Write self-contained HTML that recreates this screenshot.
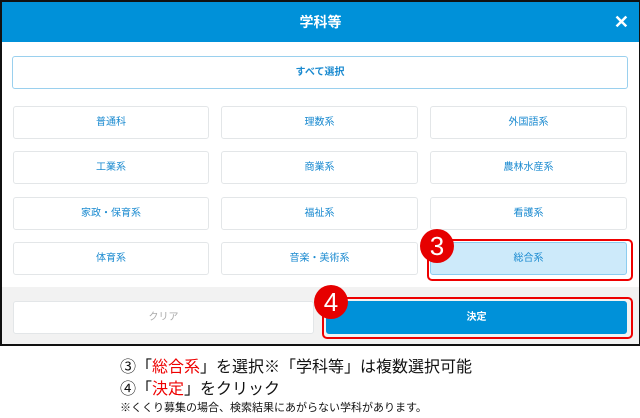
<!DOCTYPE html>
<html><head><meta charset="utf-8"><style>
*{margin:0;padding:0;box-sizing:border-box}
body{width:640px;height:418px;background:#fff;font-family:"Liberation Sans","Noto Sans CJK JP",sans-serif;position:relative;overflow:hidden}
.frame{position:absolute;left:0;top:0;width:640px;height:346px;border:2px solid #111;border-right:1px solid #111;background:#fff;overflow:hidden}
.hdr{position:absolute;left:0;top:0;width:100%;height:40px;background:#0091d9;color:#fff;font-size:14px;font-weight:bold;text-align:center;line-height:40px}
.x{position:absolute;right:10px;top:0;font-size:18px}
.btn{position:absolute;height:33px;border:1px solid #e3e6e8;border-radius:3px;background:#fff;color:#1a8ad0;font-size:10px;text-align:center;line-height:31px}
.all{border-color:#9ad0ee;font-weight:bold}
.foot{position:absolute;left:0;top:285px;width:100%;height:60px;background:#f2f2f2}
.red{position:absolute;border:2px solid #e00;border-radius:5px}
.num{position:absolute;width:34px;height:34px;border-radius:50%;background:#e60000;color:#fff;font-size:26px;text-align:center;line-height:34px}
.t{position:absolute;left:120px;color:#111;white-space:nowrap}
.r{color:#e00}
</style></head><body>
<div class="frame">
<div class="hdr">学科等<span class="x">✕</span></div>
<div class="btn all" style="left:10px;top:54px;width:616px">すべて選択</div>
<div class="btn" style="left:11px;top:104px;width:196px">普通科</div>
<div class="btn" style="left:219px;top:104px;width:197px">理数系</div>
<div class="btn" style="left:428px;top:104px;width:197px">外国語系</div>
<div class="btn" style="left:11px;top:149px;width:196px">工業系</div>
<div class="btn" style="left:219px;top:149px;width:197px">商業系</div>
<div class="btn" style="left:428px;top:149px;width:197px">農林水産系</div>
<div class="btn" style="left:11px;top:195px;width:196px">家政・保育系</div>
<div class="btn" style="left:219px;top:195px;width:197px">福祉系</div>
<div class="btn" style="left:428px;top:195px;width:197px">看護系</div>
<div class="btn" style="left:11px;top:240px;width:196px">体育系</div>
<div class="btn" style="left:219px;top:240px;width:197px">音楽・美術系</div>
<div class="btn" style="left:428px;top:240px;width:197px;background:#cdeafa;border-color:#8ccdf0">総合系</div>
<div class="foot"></div>
<div class="btn" style="left:11px;top:299px;width:301px;color:#aaa">クリア</div>
<div class="btn" style="left:324px;top:299px;width:301px;background:#0091d9;border-color:#0091d9;color:#fff;font-weight:bold">決定</div>
<div class="red" style="left:425px;top:237px;width:206px;height:42px"></div>
<div class="red" style="left:320px;top:295px;width:311px;height:42px"></div>
<div class="num" style="left:418px;top:227px">3</div>
<div class="num" style="left:312px;top:283px">4</div>
</div>
<div class="t" style="top:353px;font-size:16px">③「<span class="r">総合系</span>」を選択※「学科等」は複数選択可能</div>
<div class="t" style="top:375px;font-size:16px">④「<span class="r">決定</span>」をクリック</div>
<div class="t" style="top:399px;font-size:11px">※くくり募集の場合、検索結果にあがらない学科があります。</div>
</body></html>
